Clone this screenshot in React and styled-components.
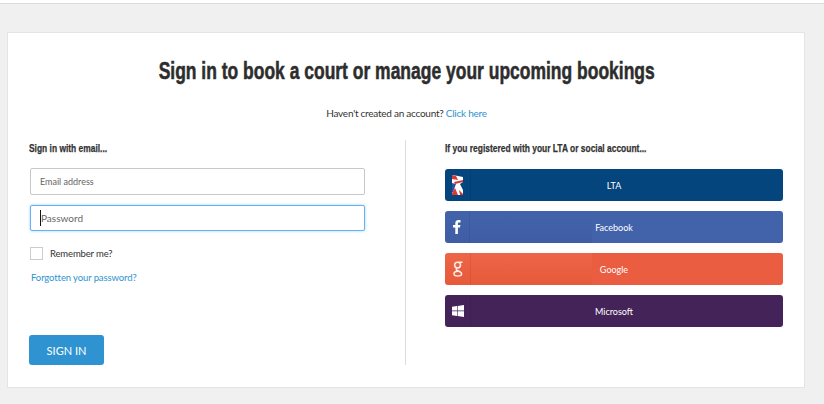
import React from "react";
import styled, { createGlobalStyle } from "styled-components";

const Global = createGlobalStyle`
  html, body { margin: 0; padding: 0; background: #f0f0f0; }
  body { font-family: "Lato", "Open Sans", sans-serif; color: #2b2b2b; }
  * { box-sizing: border-box; }
`;
const Page = styled.div`
  height: 404px;
  overflow: hidden;
  background: #f0f0f0;
  &::before {
    content: "";
    display: block;
    height: 3px;
    background: #fff;
    border-bottom: 1px solid #dcdcdc;
  }
`;
const Card = styled.main`
  margin: 28px 19px 0 7px;
  height: 356px;
  background: #fff;
  border: 1px solid #e4e4e4;
  padding: 0 20px 0 21px;
`;
const Title = styled.h1`
  margin: 23px 0 0;
  height: 30px;
  line-height: 30px;
  text-align: center;
  font-family: "Liberation Sans", sans-serif;
  font-weight: 700;
  font-size: 24px;
  color: #2d2d2d;
  white-space: nowrap;
`;
const Condensed = styled.span`
  display: inline-block;
  white-space: nowrap;
  transform: scaleX(${p => p.$x});
  transform-origin: ${p => p.$origin};
  -webkit-text-stroke: ${p => p.$stroke}px currentColor;
`;
const Intro = styled.p`
  margin: 19px 0 0;
  height: 16px;
  line-height: 16px;
  text-align: center;
  font-size: 10px;
  letter-spacing: -0.25px;
  color: #333;
`;
const Link = styled.a`
  color: #2e93d0;
  text-decoration: none;
`;
const Columns = styled.div`
  display: grid;
  grid-template-columns: 376px 1px 338px;
  margin-top: 19px;
  height: 225px;
`;
const Left = styled.section`
  display: flex;
  flex-direction: column;
  height: 225px;
`;
const Right = styled.section`
  margin-left: 39px;
  width: 338px;
  display: flex;
  flex-direction: column;
`;
const Divider = styled.div`
  background: #dcdcdc;
  width: 1px;
`;
const Heading = styled.h2`
  margin: 0;
  height: 16px;
  line-height: 16px;
  font-family: "Liberation Sans", sans-serif;
  font-size: 11px;
  font-weight: 700;
  color: #333;
`;
const FieldWrap = styled.div`
  position: relative;
  margin: ${p => p.$top}px 0 0 1px;
  width: 335px;
`;
const Field = styled.input`
  display: block;
  width: 100%;
  height: ${p => (p.$focus ? 26 : 27)}px;
  padding: 0 10px 0 ${p => (p.$focus ? 10 : 9)}px;
  border: 1px solid ${p => (p.$focus ? "#66b2f2" : "#c8c8c8")};
  border-radius: 2px;
  font-family: "Lato", sans-serif;
  font-size: ${p => (p.$focus ? 10 : 9)}px;
  outline: none;
  background: #fff;
  box-shadow: ${p => (p.$focus ? "0 0 3px rgba(102,178,242,.6)" : "none")};
  &::placeholder { color: #666; opacity: 1; }
`;
const Caret = styled.span`
  position: absolute;
  left: 10px;
  top: 5px;
  width: 1px;
  height: 16px;
  background: #111;
`;
const Remember = styled.label`
  display: flex;
  align-items: center;
  gap: 7px;
  margin: 16px 0 0 1px;
  height: 13px;
  font-size: 9.5px;
  letter-spacing: -0.15px;
  color: #333;
`;
const Box = styled.span`
  display: block;
  width: 13px;
  height: 13px;
  border: 1px solid #c8cdd0;
`;
const Forgot = styled(Link)`
  display: block;
  margin: 11px 0 0 2px;
  height: 14px;
  line-height: 14px;
  font-size: 9.5px;
  letter-spacing: -0.11px;
`;
const Submit = styled.button`
  margin-top: auto;
  width: 75px;
  height: 30px;
  padding: 0;
  border: none;
  border-radius: 3px;
  background: #2e93d0;
  color: #fff;
  font-family: "Lato", sans-serif;
  font-size: 11px;
`;
const Providers = styled.div`
  display: flex;
  flex-direction: column;
  gap: 10px;
  margin-top: 13px;
`;
const Provider = styled.button`
  position: relative;
  display: block;
  width: 338px;
  height: 32px;
  padding: 0;
  border: none;
  border-radius: 3px;
  background: ${p => p.$shade
    ? `linear-gradient(${p.$shade}) left / 147px 100% no-repeat, ${p.$bg}`
    : p.$bg};
  color: #fff;
  font-family: "Lato", sans-serif;
  font-size: 9px;
  text-align: center;
`;
const IconCell = styled.span`
  position: absolute;
  left: 0;
  top: 0;
  bottom: 0;
  width: ${p => p.$w}px;
  display: flex;
  align-items: center;
  justify-content: center;
  border-right: 1px solid rgba(0, 0, 0, 0.07);
`;

const LtaIcon = () => (
  <svg width="11" height="20" viewBox="0 0 11 20">
    <path d="M0 0L6 1 11 2V7L8 9 11 15V20H0Z" fill="#fff" />
    <path d="M0 0L4 1 6 5 0 4Z" fill="#d93a32" />
    <path d="M2 7L11 5V7L3 9Z" fill="#d93a32" />
    <path d="M0 8L4 9 1 17H0Z" fill="#2a4fa0" />
    <path d="M0 18L3 13 6 20H0Z" fill="#d93a32" />
    <path d="M7 15L11 19V20H8Z" fill="#d93a32" />
  </svg>
);
const FbIcon = () => (
  <svg width="8" height="14" viewBox="0 0 8 14" fill="#fff">
    <path d="M2.3 14V7.6H0V5h2.3V3.2C2.3 1 3.6 0 5.5 0c.9 0 1.7.1 2 .1v2.3H6.2c-1 0-1.3.5-1.3 1.2V5h2.5l-.4 2.6H4.9V14z" />
  </svg>
);
const GIcon = () => (
  <svg width="10" height="16" viewBox="0 0 10 16" fill="none" stroke="#ffece6" strokeWidth="1.5">
    <path d="M9.5 1.2H4.6C2.8 1.2 1.6 2.5 1.6 4.1S2.9 7 4.6 7 7.5 5.7 7.5 4.1 6.3 1.2 4.6 1.2" />
    <path d="M4 7.1C2.8 8 3 9 4.8 9.7 7.4 10.7 8.6 11.3 8.6 12.7 8.6 14.2 7 15 4.8 15S1 14.2 1 12.7 2.8 10.3 5 10.3" />
  </svg>
);
const WinIcon = () => (
  <svg width="12" height="12" viewBox="0 0 12 12" fill="#fff">
    <path d="M0 1.8 5 1v4.6H0zM5.6 0.9 12 0v5.6H5.6zM0 6.2h5v4.8L0 10.2zM5.6 6.2H12V12l-6.4-.9z" />
  </svg>
);

const providers = [
  { name: "LTA", bg: "#03457c", w: 26, Icon: LtaIcon },
  { name: "Facebook", bg: "#4262aa", shade: "#4263ab, #3f5da3", w: 25, Icon: FbIcon },
  { name: "Google", bg: "#ea5d41", shade: "#ed6548, #e65a3a", w: 26, Icon: GIcon },
  { name: "Microsoft", bg: "#442359", w: 26, Icon: WinIcon },
];

export default function App() {
  return (
    <Page>
      <Global />
      <Card>
        <Title>
          <Condensed $x={0.728} $origin="center" $stroke={0.55}>
            Sign in to book a court or manage your upcoming bookings
          </Condensed>
        </Title>
        <Intro>Haven't created an account? <Link href="#">Click here</Link></Intro>
        <Columns>
          <Left>
            <Heading>
              <Condensed $x={0.765} $origin="left" $stroke={0.25}>Sign in with email...</Condensed>
            </Heading>
            <FieldWrap $top={12}><Field placeholder="Email address" /></FieldWrap>
            <FieldWrap $top={10}><Field $focus placeholder="Password" /><Caret /></FieldWrap>
            <Remember><Box />Remember me?</Remember>
            <Forgot href="#">Forgotten your password?</Forgot>
            <Submit>SIGN IN</Submit>
          </Left>
          <Divider />
          <Right>
            <Heading>
              <Condensed $x={0.767} $origin="left" $stroke={0.25}>If you registered with your LTA or social account...</Condensed>
            </Heading>
            <Providers>
              {providers.map(({ name, bg, shade, w, Icon }) => (
                <Provider key={name} $bg={bg} $shade={shade}>
                  <IconCell $w={w}><Icon /></IconCell>
                  {name}
                </Provider>
              ))}
            </Providers>
          </Right>
        </Columns>
      </Card>
    </Page>
  );
}
